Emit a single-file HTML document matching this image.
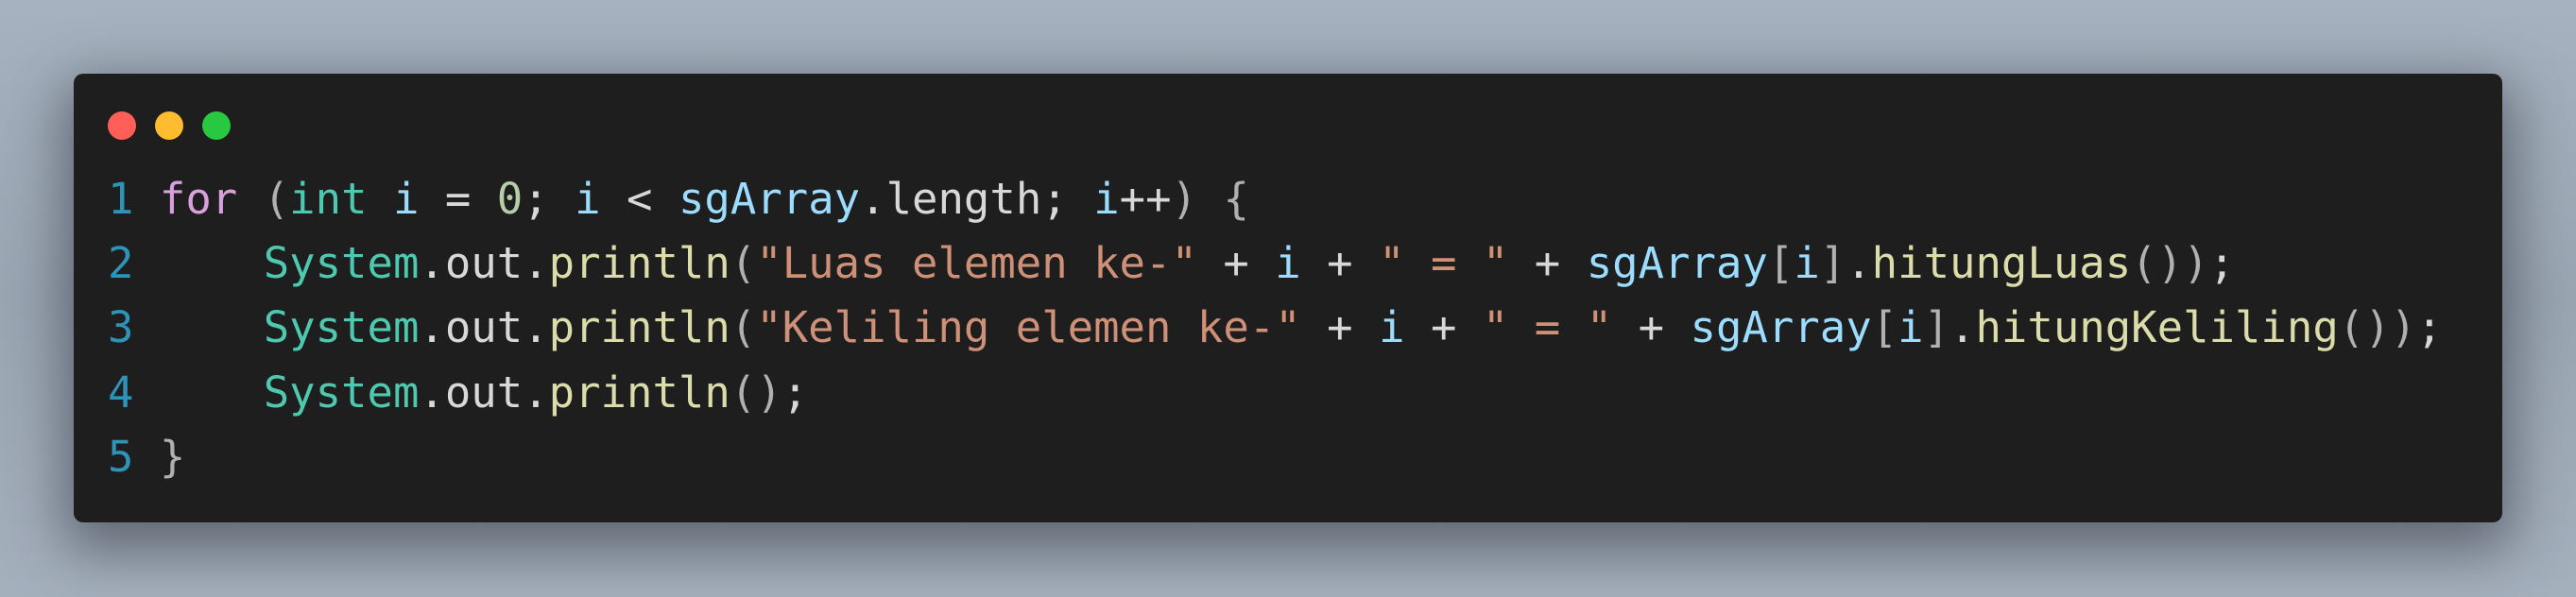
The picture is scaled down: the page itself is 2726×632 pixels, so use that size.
<!DOCTYPE html>
<html><head><meta charset="utf-8"><style>
html,body{margin:0;padding:0}
body{width:2726px;height:632px;overflow:hidden;background:linear-gradient(180deg,#a6b2bf 0%,#9aa5b2 50%,#a5b0bd 100%);position:relative}
.win{position:absolute;left:78px;top:78px;width:2570px;height:475px;background:#1e1e1e;border-radius:10px;box-shadow:0 20px 60px 10px rgba(40,45,55,0.55)}
.dot{position:absolute;top:118px;width:30px;height:30px;border-radius:50%}
pre{position:absolute;left:114px;top:0;margin:0;font-family:"DejaVu Sans Mono",monospace;font-size:45.6px;line-height:68.2px;color:#d8d8d8}
.n{color:#2e93b8}.k{color:#d8a0dc}.t{color:#4ec9b0}.v{color:#9cdcfe}.num{color:#b5cea8}.s{color:#ce9178}.f{color:#dcdcaa}.p{color:#b0b0b0}
</style></head><body>
<div class="win"></div>
<div class="dot" style="left:114px;background:#ff5f57"></div>
<div class="dot" style="left:164px;background:#febc2e"></div>
<div class="dot" style="left:214px;background:#28c840"></div>
<pre style="top:177px"><span class="n">1</span> <span class="k">for</span> <span class="p">(</span><span class="t">int</span> <span class="v">i</span> = <span class="num">0</span>; <span class="v">i</span> &lt; <span class="v">sgArray</span>.length; <span class="v">i</span>++<span class="p">)</span> <span class="p">{</span>
<span class="n">2</span>     <span class="t">System</span>.out.<span class="f">println</span><span class="p">(</span><span class="s">"Luas elemen ke-"</span> + <span class="v">i</span> + <span class="s">" = "</span> + <span class="v">sgArray</span><span class="p">[</span><span class="v">i</span><span class="p">]</span>.<span class="f">hitungLuas</span><span class="p">())</span>;
<span class="n">3</span>     <span class="t">System</span>.out.<span class="f">println</span><span class="p">(</span><span class="s">"Keliling elemen ke-"</span> + <span class="v">i</span> + <span class="s">" = "</span> + <span class="v">sgArray</span><span class="p">[</span><span class="v">i</span><span class="p">]</span>.<span class="f">hitungKeliling</span><span class="p">())</span>;
<span class="n">4</span>     <span class="t">System</span>.out.<span class="f">println</span><span class="p">()</span>;
<span class="n">5</span> <span class="p">}</span></pre>
</body></html>
